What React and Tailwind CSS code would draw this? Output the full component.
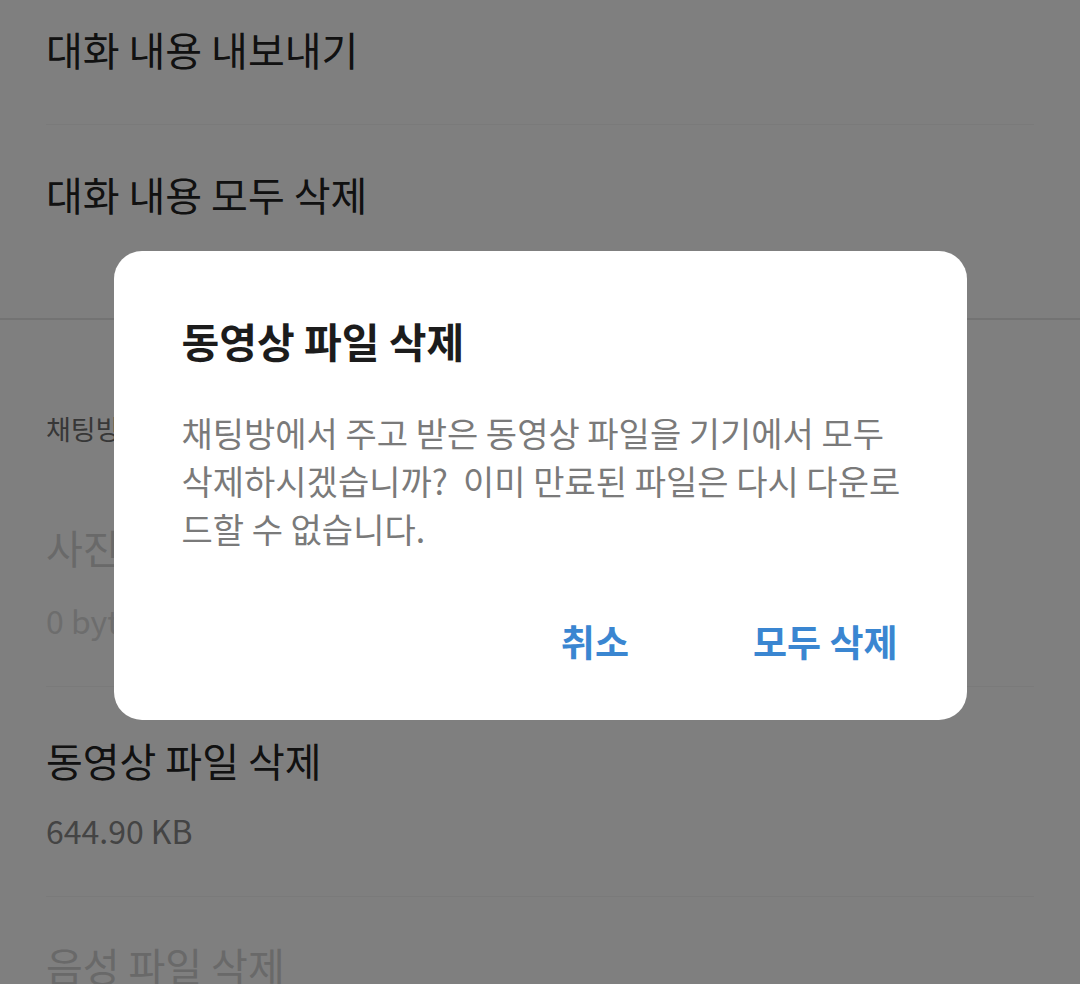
export default function App() {
  return (
    <div className="relative h-screen overflow-hidden bg-white font-['Noto_Sans_CJK_KR',sans-serif]">
      {/* Settings list behind the dialog */}
      <div className="pt-[23px] h-[125px] mx-[46px] border-b border-[#f4f4f4]">
        <p className="text-[40px] leading-[52px] text-[#222]">대화 내용 내보내기</p>
      </div>
      <div className="px-[46px] pt-[43px] h-[193px]">
        <p className="text-[40px] leading-[52px] text-[#222]">대화 내용 모두 삭제</p>
      </div>
      <div className="h-[2px] bg-[#e6e6e6]" />

      <div className="px-[46px] pt-[94px]">
        <p className="text-[27px] leading-[30px] text-[#6e6e6e]">채팅방 저장 공간 관리</p>
      </div>

      <div className="mx-[46px] pt-[77px] pb-[46px] border-b border-[#f4f4f4]">
        <p className="text-[40px] leading-[52px] text-[#d2d2d2]">사진 파일 삭제</p>
        <p className="mt-[27px] text-[32px] leading-[40px] text-[#dadada]">0 bytes</p>
      </div>
      <div className="mx-[46px] pt-[47px] pb-[46px] border-b border-[#f4f4f4]">
        <p className="text-[40px] leading-[52px] text-[#222]">동영상 파일 삭제</p>
        <p className="mt-[24px] text-[32px] leading-[40px] text-[#888]">644.90 KB</p>
      </div>
      <div className="px-[46px] pt-[42px]">
        <p className="text-[40px] leading-[52px] text-[#d2d2d2]">음성 파일 삭제</p>
      </div>

      {/* Dim + dialog */}
      <div className="fixed inset-0 bg-black/50 flex items-center justify-center pb-[13px]">
        <div className="w-[853px] h-[469px] bg-white rounded-[28px] pl-[68px] pt-[63px]">
          <h2 className="text-[41px] leading-[52px] font-bold text-[#1c1c1c]">동영상 파일 삭제</h2>
          <p className="mt-[43px] text-[34px] leading-[48px] text-[#7a7a7a] whitespace-pre">
            {'채팅방에서 주고 받은 동영상 파일을 기기에서 모두\n삭제하시겠습니까?  이미 만료된 파일은 다시 다운로\n드할 수 없습니다.'}
          </p>
          <div className="mt-[58px] flex justify-end items-center gap-[124px] pr-[69px] h-[60px]">
            <button className="text-[37px] font-bold text-[#3a86d1] leading-[60px]">취소</button>
            <button className="text-[37px] font-bold text-[#3a86d1] leading-[60px]">모두 삭제</button>
          </div>
        </div>
      </div>
    </div>
  );
}
